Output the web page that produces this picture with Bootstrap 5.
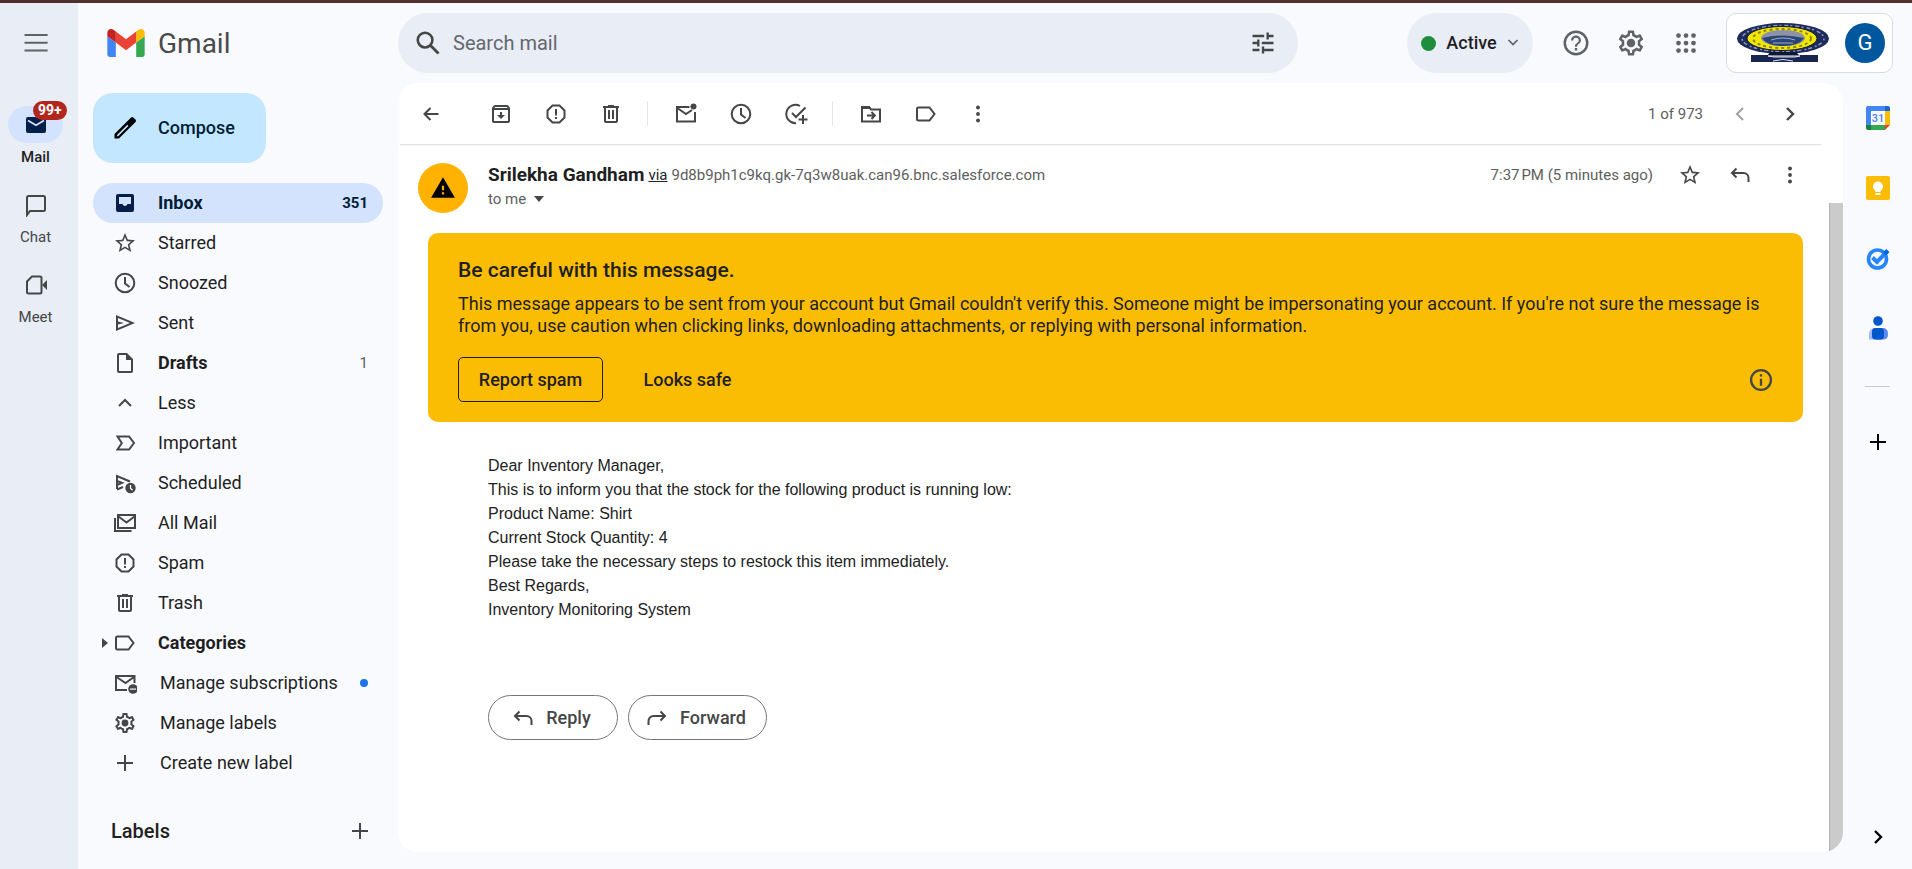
<!DOCTYPE html>
<html lang="en">
<head>
<meta charset="utf-8">
<meta name="viewport" content="width=device-width, initial-scale=1">
<title>Inbox - Gmail</title>
<link rel="stylesheet" href="https://cdn.jsdelivr.net/npm/bootstrap@5.3.0/dist/css/bootstrap.min.css">
<style>
:root { --ink: #1f1f1f; --muted: #5e5e5e; --icon: #444746; --page: #f9fafe; --tint: #e9edf6; --pick: #d3e3fd; }
body { background: var(--page); color: var(--ink); font-family: Roboto, "Liberation Sans", sans-serif; font-size: 18px; line-height: 24px; border-top: 3px solid #4f302f; }
#shell { min-height: calc(100vh - 3px); }
a { color: inherit; text-decoration: none; }
.ico { width: 24px; height: 24px; flex: none; fill: currentColor; color: var(--icon); display: block; }
.ico-md { width: 28px; height: 28px; }
.ico-lg { width: 30px; height: 30px; color: #5f6368; }
.line { fill: none; stroke: currentColor; stroke-width: 2; }
.bare { border: 0; background: none; padding: 0; display: flex; align-items: center; justify-content: center; flex: none; color: inherit; }

.rail { width: 78px; flex: none; background: var(--tint); padding-top: 25px; }
.rail-menu { margin: 0 auto; padding-right: 6px; }
.rail-link { font-size: 15px; line-height: 20px; color: var(--icon); height: 80px; }
.rail-link .pod { width: 55px; height: 37px; border-radius: 19px; margin-bottom: 4px; }
.rail-link.on { color: var(--ink); font-weight: 500; }
.rail-link.on .pod { background: var(--pick); }
.rail-link.on .ico { color: #041e49; }
.count-badge { position: absolute; top: -5px; left: 25px; background: #b3261e; color: #fff; font-size: 14px; font-weight: 700; line-height: 19px; padding: 0 5px; border-radius: 10px; }
.rail nav { margin-top: 48px; padding-right: 7px; }

.top { height: 80px; padding-right: 19px; }
.brand { width: 320px; flex: none; padding-left: 29px; gap: 13px; }
.brand-name { font-size: 28px; line-height: 32px; color: #4a4a4a; padding-top: 2px; }
.search { height: 60px; background: var(--tint); border-radius: 30px; flex: 0 1 900px; padding: 0 21px 0 16px; gap: 11px; }
.search input { font-size: 20px; line-height: 24px; color: var(--muted); }
.search input::placeholder { color: #65686b; opacity: 1; }
.status { height: 60px; border-radius: 30px; background: var(--tint); width: 126px; gap: 10px; font-weight: 500; margin-right: 15px; }
.dot-green { width: 15px; height: 15px; border-radius: 50%; background: #1e8e3e; }
.top .tool { width: 55px; height: 48px; }
.account { height: 60px; width: 167px; border: 1px solid #dadce0; border-radius: 10px; background: #fff; margin-left: 13px; padding: 0 7px 0 8px; }
.avatar { width: 40px; height: 40px; border-radius: 50%; background: #00579e; color: #fff; font-size: 22px; }

.side { width: 320px; flex: none; padding: 10px 15px 0; }
.side nav { margin-top: 20px; }
.compose { height: 70px; width: 173px; border-radius: 20px; background: #c2e7ff; color: #001d35; font-weight: 500; gap: 19px; padding-left: 18px; justify-content: flex-start; }
.side-link { height: 40px; padding: 0 15px 0 20px; border-radius: 20px; position: relative; }
.side-link .ico { margin-right: 21px; }
.side-link.wide-gap .ico { margin-right: 23px; }
.side-link.on { background: var(--pick); color: #001d35; }
.side-link.on .ico { color: #041e49; }
.side-link .num { font-size: 15px; }
.caret { position: absolute; left: 9px; width: 6px; height: 10px; }
.dot-blue { width: 8px; height: 8px; border-radius: 50%; background: #1a73e8; }
.labels-head { font-size: 20px; font-weight: 500; margin-top: 28px; padding: 0 11px 0 18px; height: 40px; }

.pane { background: #fff; border-radius: 20px; min-width: 0; margin-bottom: 17px; overflow: hidden; }
.toolbar-row { height: 62px; margin: 0 22px 0 2px; padding-right: 6px; border-bottom: 1px solid #e2e3e5; box-shadow: 0 1px 2px #0000000c; }
.toolbar-row .tool { width: 55px; height: 48px; }
.toolbar-row .tool-back { width: 61px; margin-right: 12px; }
.toolbar-row .tool-end { width: 50px; height: 48px; }
.bar-line { width: 1px; height: 25px; background: #e3e5e8; margin: 0 10px 0 9px; }
.small-txt { font-size: 15px; color: var(--muted); }
.end-note { margin: 0 12px 0 auto; }
.scroller { width: 14px; flex: none; margin-top: 58px; background: #cbcbcb; border-left: 1px solid #b4b4b4; }
.sender-pic { width: 50px; height: 50px; border-radius: 50%; background: #ffb300; color: #000; }
.msg-head { padding: 18px 14px 0 20px; gap: 20px; }
.msg-head .tool { width: 50px; height: 24px; }
.sender { font-size: 19px; font-weight: 700; }
.warn { background: #fbbc04; border-radius: 10px; margin: 20px 26px 0 30px; padding: 24px 28px 20px 30px; }
.warn h2 { font-size: 21px; line-height: 26px; font-weight: 500; margin: 0 0 10px; }
.warn p { line-height: 22px; margin: 0 0 20px; }
.warn .act { height: 45px; font-weight: 500; border-radius: 5px; width: 145px; }
.warn .act.edge { border: 1px solid var(--ink); margin-right: 12px; }
.mail-text { font-family: "Liberation Sans", Arial, sans-serif; font-size: 16px; line-height: 24px; color: #222; padding: 32px 0 0 90px; }
.mail-text p { margin: 0; }
.replies { padding: 73px 0 0 90px; gap: 10px; }
.replies .act { height: 45px; border: 1px solid #747775; border-radius: 23px; font-weight: 500; color: var(--icon); gap: 11px; padding-right: 4px; }
.replies .reply { width: 130px; }
.replies .forward { width: 139px; }

.apps { width: 69px; flex: none; padding: 23px 0 20px; }
.apps .tool { height: 24px; margin-bottom: 46px; }
.apps hr { width: 25px; margin: 0 0 43px; border-color: #9aa0a6; opacity: .5; }
</style>
</head>
<body>
<svg width="0" height="0" class="position-absolute" aria-hidden="true">
  <defs>
    <symbol id="i-menu" viewBox="0 0 24 24"><path d="M2.800 4.700h18.500v1.600H2.800zM2.800 11h18.500v1.600H2.800zM2.800 17.200h18.500v1.600H2.800z"/></symbol>
    <symbol id="i-inbox" viewBox="0 0 24 24"><path d="M5 3a2 2 0 0 0-2 2v14a2 2 0 0 0 2 2h14a2 2 0 0 0 2-2V5a2 2 0 0 0-2-2zM6 6h12v7h-3.500a2.600 2.600 0 0 1-5 0H6z" fill-rule="evenodd"/></symbol>
    <symbol id="i-star" viewBox="0 0 24 24"><path d="M22 9.240l-7.190-.620L12 2 9.190 8.630 2 9.240l5.460 4.730L5.820 21 12 17.270 18.180 21l-1.630-7.030L22 9.240zM12 15.400l-3.760 2.270 1-4.280-3.320-2.880 4.380-.380L12 6.100l1.710 4.040 4.380.380-3.320 2.880 1 4.280L12 15.400z"/></symbol>
    <symbol id="i-clock" viewBox="0 0 24 24"><circle cx="12" cy="12" r="9.300" class="line"/><path d="M12 6v6.500l4.500 3.500" class="line"/></symbol>
    <symbol id="i-send" viewBox="0 0 24 24"><path d="M3 4v16l19-8zM5 7l12 5-12 5v-3.500l6-1.500-6-1.500z" fill-rule="evenodd"/></symbol>
    <symbol id="i-draft" viewBox="0 0 24 24"><path d="M6 2a2 2 0 0 0-2 2v16a2 2 0 0 0 2 2h12a2 2 0 0 0 2-2V8l-6-6zm0 2h7v5h5v11H6z" fill-rule="evenodd"/></symbol>
    <symbol id="i-less" viewBox="0 0 24 24"><path d="M6 15l6-6 6 6" class="line"/></symbol>
    <symbol id="i-important" viewBox="0 0 24 24"><path d="M4.500 5.500h11.500l5 6.500-5 6.500H4.500l4.300-6.500z" class="line"/></symbol>
    <symbol id="i-sched" viewBox="0 0 24 24"><path d="M4 18V5l13 5.500M4 10l5 1.800L4 14M4 18.500l6-2.500" class="line"/><circle cx="17.500" cy="17" r="5.200"/><path d="M17.500 14v3.200l2 2" fill="none" stroke="#f9fafe" stroke-width="1.300"/></symbol>
    <symbol id="i-allmail" viewBox="0 0 24 24"><path d="M5 4h17v13H5zM5.500 5.500l8 6 8-6M2 7v13h16.500" class="line"/></symbol>
    <symbol id="i-spam" viewBox="0 0 24 24"><path d="M8.500 3.500h7l5 5v7l-5 5h-7l-5-5v-7z" class="line"/><path d="M11 7h2v6.500h-2zM11 15h2v2h-2z"/></symbol>
    <symbol id="i-trash" viewBox="0 0 24 24"><path d="M15 4V3H9v1H4v2h1v13c0 1.100.900 2 2 2h10c1.100 0 2-.900 2-2V6h1V4h-5zm2 15H7V6h10v13zM9 8h2v9H9zm4 0h2v9h-2z"/></symbol>
    <symbol id="i-label" viewBox="0 0 24 24"><path d="M4.500 5.500h11l5 6.500-5 6.500h-11A1.500 1.500 0 0 1 3 17V7a1.500 1.500 0 0 1 1.500-1.500z" class="line"/></symbol>
    <symbol id="i-subs" viewBox="0 0 24 24"><path d="M14 19H3V5h18.500v7M3.500 6l9 6 8.500-6" class="line"/><circle cx="20" cy="18" r="4.800"/><path d="M17 17.500h6v1.200h-6z" fill="#f9fafe"/></symbol>
    <symbol id="i-gear" viewBox="0 0 24 24"><path d="M19.430 12.980c.040-.320.070-.640.070-.980 0-.340-.030-.660-.070-.980l2.110-1.650c.190-.150.240-.420.120-.640l-2-3.460c-.090-.160-.260-.250-.440-.250-.060 0-.120.010-.170.030l-2.490 1c-.520-.400-1.080-.730-1.690-.980l-.380-2.650C14.460 2.180 14.250 2 14 2h-4c-.250 0-.460.180-.490.420l-.380 2.650c-.610.250-1.170.590-1.690.980l-2.490-1c-.060-.020-.120-.030-.180-.030-.170 0-.340.090-.430.250l-2 3.460c-.130.220-.070.490.120.640l2.110 1.650c-.040.320-.070.650-.070.980 0 .330.030.660.070.980l-2.110 1.650c-.190.150-.240.420-.120.640l2 3.460c.090.160.260.250.440.250.060 0 .120-.010.170-.030l2.490-1c.520.400 1.080.730 1.690.980l.380 2.650c.030.240.240.420.490.420h4c.250 0 .460-.180.490-.420l.380-2.650c.610-.250 1.170-.590 1.690-.980l2.490 1c.060.020.120.030.180.030.170 0 .340-.090.430-.250l2-3.460c.120-.220.070-.490-.120-.640l-2.110-1.650zm-1.980-1.710c.040.310.050.520.050.730 0 .210-.020.430-.050.730l-.140 1.130.890.700 1.080.840-.700 1.210-1.270-.510-1.040-.420-.900.680c-.430.320-.840.560-1.250.730l-1.060.430-.160 1.130-.200 1.350h-1.400l-.190-1.350-.160-1.130-1.060-.430c-.430-.180-.830-.410-1.230-.710l-.910-.700-1.060.430-1.270.510-.700-1.210 1.080-.840.890-.700-.140-1.130c-.030-.310-.050-.540-.050-.740s.020-.430.050-.730l.140-1.130-.890-.700-1.080-.840.700-1.210 1.270.510 1.040.420.900-.680c.430-.320.840-.560 1.250-.730l1.060-.430.160-1.130.200-1.350h1.390l.190 1.350.160 1.130 1.060.430c.430.180.830.410 1.230.710l.910.700 1.060-.430 1.270-.510.700 1.210-1.070.850-.890.700.140 1.130z"/><circle cx="12" cy="12" r="3.400"/></symbol>
    <symbol id="i-plus" viewBox="0 0 24 24"><path d="M12 4v16M4 12h16" class="line"/></symbol>
    <symbol id="i-search" viewBox="0 0 24 24"><circle cx="9.500" cy="9.500" r="6.300" fill="none" stroke="currentColor" stroke-width="2.200"/><path d="M14 14l7 7" fill="none" stroke="currentColor" stroke-width="2.400"/></symbol>
    <symbol id="i-tune" viewBox="0 0 24 24"><path d="M3 17v2h6v-2H3zM3 5v2h10V5H3zm10 16v-2h8v-2h-8v-2h-2v6h2zM7 9v2H3v2h4v2h2V9H7zm14 4v-2H11v2h10zm-6-4h2V7h4V5h-4V3h-2v6z"/></symbol>
    <symbol id="i-help" viewBox="0 0 24 24"><circle cx="12" cy="12" r="9" class="line"/><path d="M11 16h2v2h-2zM12 6a4 4 0 0 0-4 4h1.800a2.200 2.200 0 1 1 4.400 0c0 1.900-3.100 2.100-3.100 5h1.800c0-2.200 3.100-2.600 3.100-5a4 4 0 0 0-4-4z"/></symbol>
    <symbol id="i-grid" viewBox="0 0 24 24"><g id="r3"><circle cx="6" cy="6" r="1.900"/><circle cx="12" cy="6" r="1.900"/><circle cx="18" cy="6" r="1.900"/></g><use href="#r3" y="6"/><use href="#r3" y="12"/></symbol>
    <symbol id="i-back" viewBox="0 0 24 24"><path d="M19.500 12H6M11.500 6l-6 6 6 6" class="line"/></symbol>
    <symbol id="i-archive" viewBox="0 0 24 24"><path d="M20.540 5.230l-1.390-1.680C18.880 3.210 18.470 3 18 3H6c-.470 0-.880.210-1.160.550L3.460 5.230C3.170 5.570 3 6.020 3 6.500V19c0 1.100.900 2 2 2h14c1.100 0 2-.900 2-2V6.500c0-.480-.170-.930-.460-1.270zM6.240 5h11.520l.830 1H5.420l.820-1zM5 19V8h14v11H5zm8-9h-2v3H8l4 4 4-4h-3z"/></symbol>
    <symbol id="i-unread" viewBox="0 0 24 24"><path d="M15.500 5H3v14.500h18V10M4 6.500l8 5.500 6-4" class="line"/><circle cx="19.500" cy="4.500" r="3"/></symbol>
    <symbol id="i-task" viewBox="0 0 24 24"><path d="M16 4a9.200 9.200 0 1 0-4 17.200M8 11l4 4L21.500 5.500M19 13v9M14.500 17.500h9" class="line"/></symbol>
    <symbol id="i-move" viewBox="0 0 24 24"><path d="M3 5h7l2 2.500h9v12H3zM8 13.500h7M12.500 10l3.300 3.500-3.300 3.500" class="line"/><path d="M3 4h7.500l2 3H3z"/></symbol>
    <symbol id="i-dots" viewBox="0 0 24 24"><circle cx="12" cy="5.500" r="1.900"/><circle cx="12" cy="12" r="1.900"/><circle cx="12" cy="18.500" r="1.900"/></symbol>
    <symbol id="i-left" viewBox="0 0 24 24"><path d="M15 6l-6 6 6 6" class="line"/></symbol>
    <symbol id="i-right" viewBox="0 0 24 24"><path d="M9 6l6 6-6 6" fill="none" stroke="currentColor" stroke-width="2.400"/></symbol>
    <symbol id="i-reply" viewBox="0 0 24 24"><path d="M8.500 5.500L4 10l4.500 4.500M4 10h11.500a5 5 0 0 1 5 5v4" class="line"/></symbol>
    <symbol id="i-forward" viewBox="0 0 24 24"><path d="M15.500 5.500L20 10l-4.500 4.500M20 10H8.500a5 5 0 0 0-5 5v4" class="line"/></symbol>
    <symbol id="i-info" viewBox="0 0 24 24"><circle cx="12" cy="12" r="8.500" class="line"/><path d="M11 7h2v2h-2zM11 11h2v6h-2z"/></symbol>
  </defs>
</svg>

<div class="d-flex" id="shell">
  <aside class="rail">
    <button class="bare rail-menu" aria-label="Main menu"><svg class="ico ico-lg"><use href="#i-menu"/></svg></button>
    <nav class="d-flex flex-column">
      <a href="#" class="rail-link on d-flex flex-column align-items-center">
        <span class="pod d-flex align-items-center justify-content-center position-relative">
          <svg class="ico" viewBox="0 0 24 24"><path d="M4 4h16a2 2 0 0 1 2 2v12a2 2 0 0 1-2 2H4a2 2 0 0 1-2-2V6a2 2 0 0 1 2-2z"/><path d="M4 7.500l8 4.800 8-4.800" fill="none" stroke="#d3e3fd" stroke-width="1.800"/></svg>
          <span class="count-badge">99+</span>
        </span>Mail</a>
      <a href="#" class="rail-link d-flex flex-column align-items-center"><span class="pod d-flex align-items-center justify-content-center"><svg class="ico" viewBox="0 0 24 24"><path d="M3 22V4.500A1.500 1.500 0 0 1 4.500 3h15A1.500 1.500 0 0 1 21 4.500v12a1.500 1.500 0 0 1-1.500 1.500H6z" class="line"/></svg></span>Chat</a>
      <a href="#" class="rail-link d-flex flex-column align-items-center"><span class="pod d-flex align-items-center justify-content-center"><svg class="ico" viewBox="0 0 24 24"><path d="M8 3.500h8A1.500 1.500 0 0 1 17.500 5v14a1.500 1.500 0 0 1-1.500 1.500H4.500A1.500 1.500 0 0 1 3 19V8.500z" class="line"/><path d="M18 12l5-5v10z"/></svg></span>Meet</a>
    </nav>
  </aside>

  <div class="d-flex flex-column flex-grow-1">
    <header class="top d-flex align-items-center">
      <a href="#" class="brand d-flex align-items-center">
        <svg width="38" height="28" viewBox="52 42 88 66" aria-hidden="true"><path fill="#4285f4" d="M58 108h14V74L52 59v43c0 3.320 2.690 6 6 6"/><path fill="#34a853" d="M120 108h14c3.320 0 6-2.690 6-6V59l-20 15"/><path fill="#fbbc04" d="M120 48v26l20-15v-8c0-7.420-8.470-11.650-14.400-7.200"/><path fill="#ea4335" d="M72 74V48l24 18 24-18v26L96 92"/><path fill="#c5221f" d="M52 51v8l20 15V48l-5.600-4.200c-5.940-4.450-14.400-.220-14.400 7.200"/></svg>
        <span class="brand-name">Gmail</span>
      </a>
      <form class="search d-flex align-items-center" role="search">
        <button type="button" class="bare" aria-label="Search"><svg class="ico ico-md"><use href="#i-search"/></svg></button>
        <input type="text" class="form-control border-0 bg-transparent shadow-none p-0" placeholder="Search mail" aria-label="Search mail">
        <button type="button" class="bare" aria-label="Search options"><svg class="ico ico-md"><use href="#i-tune"/></svg></button>
      </form>
      <div class="d-flex align-items-center ms-auto flex-shrink-0">
        <button class="status bare"><span class="dot-green"></span>Active<svg width="12" height="8" viewBox="0 0 12 8"><path d="M1.500 1L6 5.500 10.500 1" fill="none" stroke="#5f6368" stroke-width="1.700"/></svg></button>
        <button class="bare tool" aria-label="Support"><svg class="ico ico-lg"><use href="#i-help"/></svg></button>
        <button class="bare tool" aria-label="Settings"><svg class="ico ico-lg"><use href="#i-gear"/></svg></button>
        <button class="bare tool" aria-label="Google apps"><svg class="ico ico-lg"><use href="#i-grid"/></svg></button>
        <div class="account d-flex align-items-center justify-content-between">
          <svg width="95" height="40" viewBox="0 0 95 40" role="img" aria-label="Organisation logo">
            <ellipse cx="48" cy="15.500" rx="46" ry="15.500" fill="#1c2a5c"/>
            <ellipse cx="48" cy="15.500" rx="41" ry="13" fill="none" stroke="#8f97b8" stroke-width="1.500" stroke-dasharray="2 3 4 2"/>
            <ellipse cx="47" cy="15.500" rx="35" ry="12" fill="#f3e600" stroke="#101a3a" stroke-width="1"/>
            <ellipse cx="47" cy="15.500" rx="29" ry="9.500" fill="none" stroke="#8c8618" stroke-width="2" stroke-dasharray="3 3"/>
            <ellipse cx="48" cy="15" rx="22" ry="8" fill="#8d92a8"/>
            <path d="M27 15q21-5 42 0q-5 8-21 8t-21-8" fill="#2b4476"/><path d="M36 17q12-4 24 0M38 20h20" stroke="#9fadc6" fill="none"/>
            <path d="M35 29h26l4 4H32z" fill="#0e1733"/><path d="M16 32h67v7H16z" fill="#172550"/><path d="M33 33h32l-5 1H39zM38 38q10-3 20 0" stroke="#e3e6f0" fill="none"/>
          </svg>
          <button class="avatar bare" aria-label="Google Account">G</button>
        </div>
      </div>
    </header>

    <div class="d-flex flex-grow-1">
      <aside class="side">
        <button class="compose bare"><svg class="ico ico-md text-black" viewBox="0 0 24 24"><path d="M3 17.200V21h3.800L21 6.800a1.400 1.400 0 0 0 0-2L19.200 3a1.400 1.400 0 0 0-2 0zM5.200 18.100L14 9.300l.9.900L6.100 19h-.9z" fill-rule="evenodd"/></svg>Compose</button>
        <nav class="d-flex flex-column">
          <a href="#" class="side-link on fw-bold d-flex align-items-center"><svg class="ico"><use href="#i-inbox"/></svg>Inbox<span class="num ms-auto">351</span></a>
          <a href="#" class="side-link d-flex align-items-center"><svg class="ico"><use href="#i-star"/></svg>Starred</a>
          <a href="#" class="side-link d-flex align-items-center"><svg class="ico"><use href="#i-clock"/></svg>Snoozed</a>
          <a href="#" class="side-link d-flex align-items-center"><svg class="ico"><use href="#i-send"/></svg>Sent</a>
          <a href="#" class="side-link d-flex align-items-center"><svg class="ico"><use href="#i-draft"/></svg><b>Drafts</b><span class="num small-txt ms-auto">1</span></a>
          <a href="#" class="side-link d-flex align-items-center"><svg class="ico"><use href="#i-less"/></svg>Less</a>
          <a href="#" class="side-link d-flex align-items-center"><svg class="ico"><use href="#i-important"/></svg>Important</a>
          <a href="#" class="side-link d-flex align-items-center"><svg class="ico"><use href="#i-sched"/></svg>Scheduled</a>
          <a href="#" class="side-link d-flex align-items-center"><svg class="ico"><use href="#i-allmail"/></svg>All Mail</a>
          <a href="#" class="side-link d-flex align-items-center"><svg class="ico"><use href="#i-spam"/></svg>Spam</a>
          <a href="#" class="side-link d-flex align-items-center"><svg class="ico"><use href="#i-trash"/></svg>Trash</a>
          <a href="#" class="side-link fw-bold d-flex align-items-center"><svg class="caret" viewBox="0 0 6 10"><path d="M0 0l6 5-6 5z" fill="#444746"/></svg><svg class="ico"><use href="#i-label"/></svg>Categories</a>
          <a href="#" class="side-link wide-gap d-flex align-items-center"><svg class="ico"><use href="#i-subs"/></svg>Manage subscriptions<span class="dot-blue ms-auto"></span></a>
          <a href="#" class="side-link wide-gap d-flex align-items-center"><svg class="ico"><use href="#i-gear"/></svg>Manage labels</a>
          <a href="#" class="side-link wide-gap d-flex align-items-center"><svg class="ico"><use href="#i-plus"/></svg>Create new label</a>
        </nav>
        <div class="labels-head d-flex align-items-center justify-content-between">Labels<button class="bare" aria-label="Create new label"><svg class="ico"><use href="#i-plus"/></svg></button></div>
      </aside>

      <main class="pane flex-grow-1 d-flex flex-column">
        <div class="toolbar-row d-flex align-items-center flex-shrink-0">
          <button class="bare tool tool-back" aria-label="Back to Inbox"><svg class="ico"><use href="#i-back"/></svg></button>
          <button class="bare tool" aria-label="Archive"><svg class="ico"><use href="#i-archive"/></svg></button>
          <button class="bare tool" aria-label="Report spam"><svg class="ico"><use href="#i-spam"/></svg></button>
          <button class="bare tool" aria-label="Delete"><svg class="ico"><use href="#i-trash"/></svg></button>
          <span class="bar-line"></span>
          <button class="bare tool" aria-label="Mark as unread"><svg class="ico"><use href="#i-unread"/></svg></button>
          <button class="bare tool" aria-label="Snooze"><svg class="ico"><use href="#i-clock"/></svg></button>
          <button class="bare tool" aria-label="Add to Tasks"><svg class="ico"><use href="#i-task"/></svg></button>
          <span class="bar-line"></span>
          <button class="bare tool" aria-label="Move to"><svg class="ico"><use href="#i-move"/></svg></button>
          <button class="bare tool" aria-label="Labels"><svg class="ico"><use href="#i-label"/></svg></button>
          <button class="bare tool-end" aria-label="More"><svg class="ico"><use href="#i-dots"/></svg></button>
          <span class="small-txt end-note">1 of 973</span>
          <button class="bare tool-end" aria-label="Newer" disabled><svg class="ico opacity-50"><use href="#i-left"/></svg></button>
          <button class="bare tool-end" aria-label="Older"><svg class="ico"><use href="#i-right"/></svg></button>
        </div>
        <div class="d-flex flex-grow-1">
          <article class="flex-grow-1">
            <div class="msg-head d-flex">
              <span class="sender-pic d-flex align-items-center justify-content-center"><svg width="26" height="26" viewBox="0 0 24 24"><path d="M12 2L1 21h22zM11 10v4h2v-4zM11 16v2h2v-2z" fill-rule="evenodd"/></svg></span>
              <div class="flex-grow-1">
                <div class="d-flex align-items-center">
                  <span class="sender me-1">Srilekha Gandham</span>
                  <a href="#" class="small-txt text-decoration-underline text-dark me-1">via</a>
                  <span class="small-txt">9d8b9ph1c9kq.gk-7q3w8uak.can96.bnc.salesforce.com</span>
                  <span class="small-txt end-note">7:37&#8239;PM (5 minutes ago)</span>
                  <button class="bare tool" aria-label="Star"><svg class="ico"><use href="#i-star"/></svg></button>
                  <button class="bare tool" aria-label="Reply"><svg class="ico"><use href="#i-reply"/></svg></button>
                  <button class="bare tool" aria-label="More"><svg class="ico"><use href="#i-dots"/></svg></button>
                </div>
                <button class="bare small-txt">to me<svg class="ms-2" width="10" height="6" viewBox="0 0 10 6"><path d="M0 0h10L5 6z" fill="#444746"/></svg></button>
              </div>
            </div>
            <section class="warn">
              <h2>Be careful with this message.</h2>
              <p>This message appears to be sent from your account but Gmail couldn't verify this. Someone might be impersonating your account. If you're not sure the message is from you, use caution when clicking links, downloading attachments, or replying with personal information.</p>
              <div class="d-flex align-items-center">
                <button class="bare act edge">Report spam</button>
                <button class="bare act">Looks safe</button>
                <button class="bare ms-auto" aria-label="More information"><svg class="ico ico-md"><use href="#i-info"/></svg></button>
              </div>
            </section>
            <div class="mail-text">
              <p>Dear Inventory Manager,</p>
              <p>This is to inform you that the stock for the following product is running low:</p>
              <p>Product Name: Shirt</p>
              <p>Current Stock Quantity: 4</p>
              <p>Please take the necessary steps to restock this item immediately.</p>
              <p>Best Regards,</p>
              <p>Inventory Monitoring System</p>
            </div>
            <div class="replies d-flex">
              <button class="bare act reply"><svg class="ico"><use href="#i-reply"/></svg>Reply</button>
              <button class="bare act forward"><svg class="ico"><use href="#i-forward"/></svg>Forward</button>
            </div>
          </article>
          <div class="scroller"></div>
        </div>
      </main>

      <aside class="apps d-flex flex-column align-items-center">
        <button class="bare tool" aria-label="Calendar"><svg width="24" height="24" viewBox="0 0 24 24"><path d="M2 0h17v5H5v14H0V2a2 2 0 0 1 2-2z" fill="#4285f4"/><path d="M19 0h3a2 2 0 0 1 2 2v3h-5z" fill="#1967d2"/><path d="M19 5h5v14h-5z" fill="#fbbc04"/><path d="M5 19h14v5H5z" fill="#34a853"/><path d="M0 19h5v5H2a2 2 0 0 1-2-2z" fill="#188038"/><path d="M19 19h5l-5 5z" fill="#ea4335"/><path d="M5 5h14v14H5z" fill="#fff"/><text x="12" y="16" text-anchor="middle" font-size="11" font-weight="500" fill="#4285f4">31</text></svg></button>
        <button class="bare tool" aria-label="Keep"><svg width="24" height="24" viewBox="0 0 24 24"><rect width="24" height="24" rx="2" fill="#fbbc04"/><circle cx="12" cy="10.500" r="5" fill="#fff"/><path d="M9.500 12h5v4h-5zM9.500 17h5v2h-5z" fill="#fff"/></svg></button>
        <button class="bare tool" aria-label="Tasks"><svg width="24" height="24" viewBox="0 0 24 24"><circle cx="11.500" cy="13" r="9" fill="none" stroke="#2684fc" stroke-width="3.600"/><path d="M6.500 11.500l4.500 4.500L22 4.500" fill="none" stroke="#2684fc" stroke-width="4"/><path d="M17 6.500l3-3 3 3-3 3z" fill="#0066da"/></svg></button>
        <button class="bare tool" aria-label="Contacts"><svg width="24" height="24" viewBox="0 0 24 24"><path d="M3 23.500V18a6 6 0 0 1 6-6h6v11.500z" fill="#a1b8fb"/><path d="M10 12h7a5 5 0 0 1 5 5v2a4.500 4.500 0 0 1-4.500 4.500H10z" fill="#5c8af5"/><rect x="6" y="12" width="12" height="11.500" rx="3.500" fill="#0057cc"/><circle cx="12" cy="5" r="4.800" fill="#0057cc"/></svg></button>
        <hr>
        <button class="bare tool" aria-label="Get add-ons"><svg class="ico text-black"><use href="#i-plus"/></svg></button>
        <button class="bare mt-auto" aria-label="Hide side panel"><svg class="ico text-black"><use href="#i-right"/></svg></button>
      </aside>
    </div>
  </div>
</div>
<script src="https://cdn.jsdelivr.net/npm/bootstrap@5.3.0/dist/js/bootstrap.bundle.min.js"></script>
</body>
</html>
